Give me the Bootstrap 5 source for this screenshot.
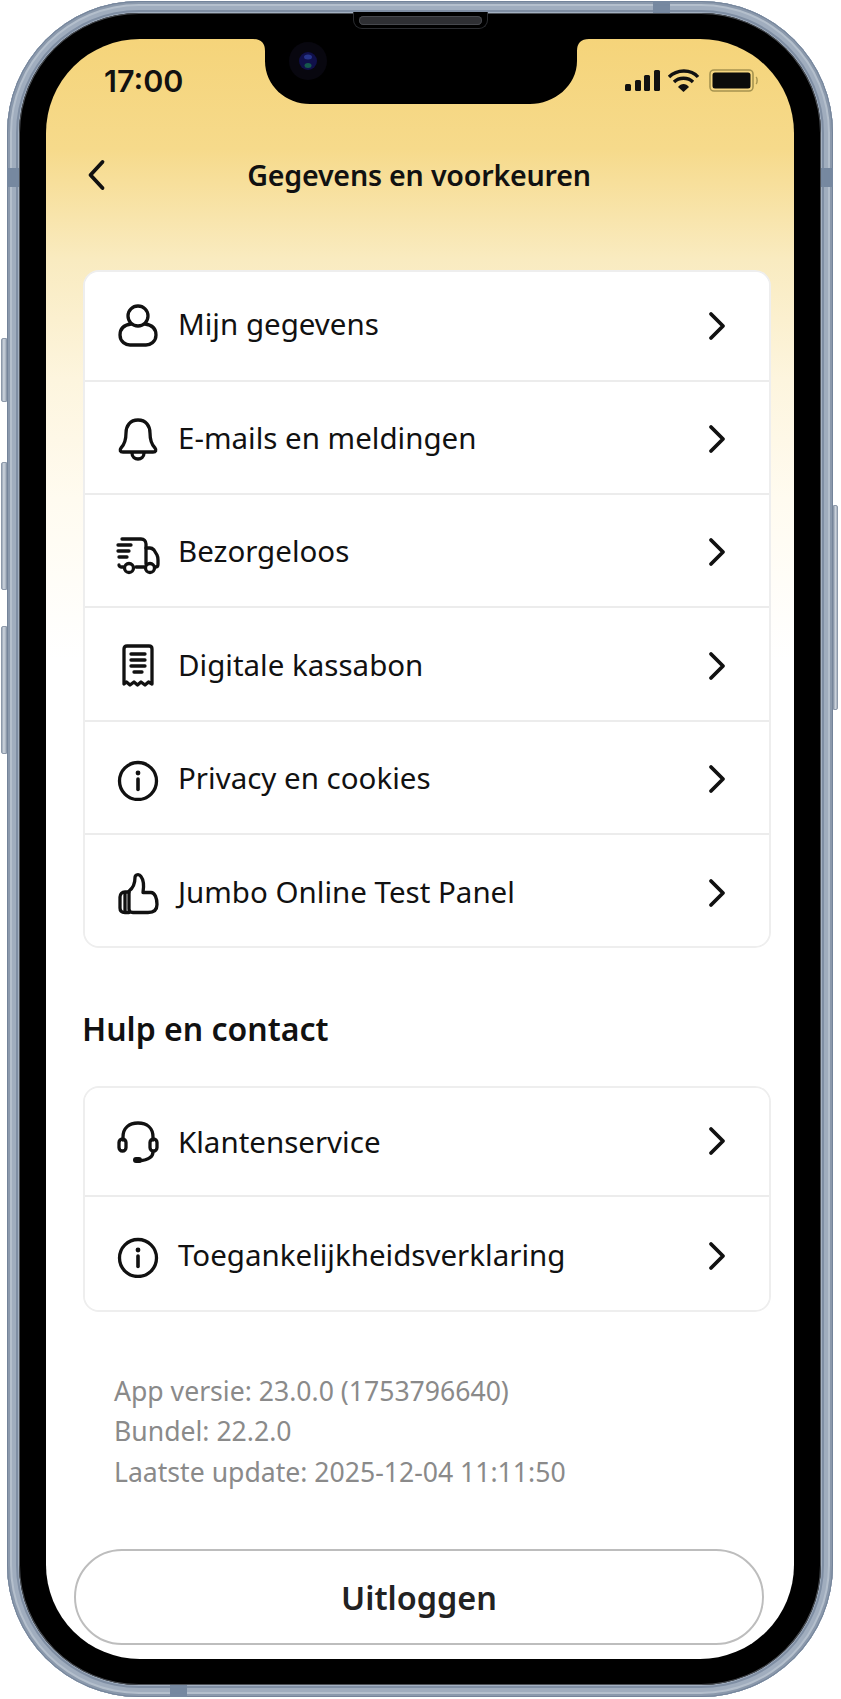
<!doctype html>
<html lang="nl">
<head>
<meta charset="utf-8">
<title>Gegevens en voorkeuren</title>
<link href="https://cdn.jsdelivr.net/npm/bootstrap@5.3.0/dist/css/bootstrap.min.css" rel="stylesheet">
<style>
html,body{margin:0;background:#fff;height:1699px;overflow:hidden}
body{font-family:"Noto Sans","Liberation Sans",sans-serif;color:#111}
.stage{position:relative;width:841px;height:1699px;padding:1px 8px 2px 7px}
.sidekey{position:absolute;background:linear-gradient(90deg,#98a4b4,#ced5de 45%,#a3aebc);border:1px solid #8d99aa}
.k1{left:1px;top:338px;width:6px;height:64px;border-radius:2px 0 0 2px}
.k2{left:1px;top:462px;width:6px;height:128px;border-radius:2px 0 0 2px}
.k3{left:1px;top:626px;width:6px;height:128px;border-radius:2px 0 0 2px}
.k4{left:833px;top:505px;width:5px;height:205px;border-radius:0 2px 2px 0}
.shell{position:relative;height:100%;padding:12px;border-radius:132px;background:#a3b0c1;box-shadow:inset 0 0 0 1px #74849a,inset 0 0 0 3px #8b99ac,inset 0 0 0 5px #b4bfcc,inset 0 0 0 9px #a0adbe,inset 0 0 0 11px #7f8ea3}
.band{position:absolute;background:#7688a0}
.b1{left:0;top:167px;width:12px;height:19px}
.b2{right:0;top:167px;width:12px;height:19px}
.b3{left:646px;top:0;width:17px;height:12px}
.b4{left:163px;bottom:0;width:17px;height:12px}
.bezel{height:100%;padding:26px 27px;border-radius:120px;background:#000;box-shadow:inset 0 0 0 1px #4b4f55}
.speaker{position:absolute;left:346px;top:11px;width:135px;height:17px;background:#000;border:1px solid #2a2c30;border-top:0;border-radius:0 0 9px 9px}
.speaker::after{content:"";position:absolute;left:5px;right:5px;top:4px;height:9px;border-radius:5px;background:#2e2f33;box-shadow:inset 0 0 0 1px #46484d}
.display{position:relative;height:100%;border-radius:94px;overflow:hidden;background:linear-gradient(180deg,#f5d47a 0,#f6da8b 110px,#f8e4aa 175px,#f9ebc0 220px,#fdf5de 340px,#fffbf0 460px,#fff 620px);padding:0 23px 0 37px}
.notch{position:absolute;left:0;top:0;width:748px;height:70px}
.statusline{height:113px;padding:26px 0 0 21px}
.clock{font-family:Inter,"Liberation Sans",sans-serif;font-weight:600;font-size:30.500px;line-height:32px;width:450px}
.signals{margin-left:auto;margin-right:12px;margin-top:3px}
.titlebar{position:relative;height:46px;margin-left:-37px;margin-right:-23px;margin-bottom:72px}
.backlink{position:absolute;left:41px;top:7px;width:20px;height:32px;display:block}
.pagetitle{margin:0;font-size:28.600px;line-height:44px;font-weight:600;letter-spacing:-.2px;color:#111;padding-right:2px}
.menulist{border:2px solid #eeeeee;border-radius:16px;overflow:hidden;background:#fff}
.menurow{height:113.400px;padding:3px 43px 0 31px;border:0;border-bottom:2px solid #ececec;border-radius:0!important;font-size:29.500px;color:#111;background:#fff;gap:18px;margin:0}
.menurow:first-child{height:109.600px;padding-top:0}
.menurow:first-child .rowtext{margin-top:-3px}
.closinglist .menurow:first-child .rowtext{margin-top:1px}
.menurow:last-child{height:110.400px;border-bottom:0;padding-top:5px}
.closinglist .menurow:last-child{height:112.400px}
.ico{width:44px;height:44px;flex:none;margin-top:1px}
.ico *{fill:none;stroke:#111;stroke-width:3.300;stroke-linecap:round;stroke-linejoin:round}
.solid{fill:#111!important;stroke:none!important}
.rowtext{flex:1 1 auto;line-height:40px;white-space:nowrap;margin-top:-2px}
.chev{width:18px;height:30px;flex:none;fill:none;stroke:#111;stroke-width:3.800;stroke-linecap:round;stroke-linejoin:round}
.grouphead{font-size:32px;font-weight:600;line-height:44px;margin:59px 0 35px -1px;color:#111}
.versioninfo{margin:59px 0 0 31px;font-size:26.600px;line-height:40.500px;color:#8a8a8a;white-space:nowrap}
.logoutbtn{display:block;margin:57px 0 0 -9px;width:690px;height:96px;border:2px solid #bdbdbd;border-radius:48px;background:#fff;font-size:32.400px;font-weight:600;color:#222;padding:0}
.logoutbtn:hover{background:#fff;color:#222;border-color:#bdbdbd}
</style>
</head>
<body>
<svg width="0" height="0" class="d-block" aria-hidden="true">
  <symbol id="i-info" viewBox="0 0 44 44">
    <circle cx="22" cy="24" r="18.500"/>
    <circle class="solid" cx="22" cy="16" r="2.400"/>
    <path d="M22 22v10.500" stroke-width="3.600"/>
  </symbol>
  <symbol id="i-chev" viewBox="0 0 18 30"><path d="M3 3l12 12L3 27"/></symbol>
</svg>
<div class="stage">
  <span class="sidekey k1"></span><span class="sidekey k2"></span><span class="sidekey k3"></span><span class="sidekey k4"></span>
  <div class="shell">
    <span class="band b1"></span><span class="band b2"></span><span class="band b3"></span><span class="band b4"></span>
    <div class="bezel">
      <div class="display">
        <svg class="notch" viewBox="0 0 748 70" aria-hidden="true">
          <path fill="#000" d="M207 0Q219 0 219 12V22C219 47 240 65 264 65H484C508 65 531 47 531 22V12Q531 0 543 0Z"/>
          <circle cx="262" cy="22" r="19" fill="#08070f"/>
          <circle cx="262" cy="22" r="9" fill="#10104a"/>
          <ellipse cx="262" cy="18" rx="4" ry="2.500" fill="#26358a"/>
          <ellipse cx="262" cy="26.500" rx="3.500" ry="2.500" fill="#15584c"/>
        </svg>
        <div class="statusline d-flex align-items-start">
          <span class="clock">17:00</span>
          <svg class="signals" width="134" height="32" viewBox="0 0 134 32" aria-hidden="true">
            <rect x="0" y="16" width="6" height="7" rx="1.500" fill="#111"/>
            <rect x="10" y="12" width="6" height="11" rx="1.500" fill="#111"/>
            <rect x="19" y="7" width="6" height="16" rx="1.500" fill="#111"/>
            <rect x="29" y="2" width="6" height="21" rx="1.500" fill="#111"/>
            <path d="M44 9C52 1 66 1 73 9" fill="none" stroke="#111" stroke-width="3.400"/>
            <path d="M49 14C54 9 63 9 68 14" fill="none" stroke="#111" stroke-width="3.400"/>
            <path d="M53 19C56 15 61 15 64 19L58.500 24Z" fill="#111"/>
            <rect x="85" y="2" width="43" height="21" rx="4" fill="none" stroke="#a6934f" stroke-width="1.600"/>
            <rect x="87.500" y="4.500" width="38" height="16" rx="2.500" fill="#0b0b0b"/>
            <path d="M131 9c1.500 1 1.500 6 0 7" fill="none" stroke="#a6934f" stroke-width="1.400"/>
          </svg>
        </div>
        <div class="titlebar d-flex align-items-center justify-content-center">
          <a class="backlink" href="#" aria-label="Terug">
            <svg width="20" height="32" viewBox="0 0 20 32" aria-hidden="true"><path d="M15.500 3L3.500 16l12 13" fill="none" stroke="#111" stroke-width="3.800" stroke-linecap="round" stroke-linejoin="round"/></svg>
          </a>
          <h1 class="pagetitle">Gegevens en voorkeuren</h1>
        </div>

        <div class="list-group menulist">
          <a href="#" class="list-group-item menurow d-flex align-items-center">
            <svg class="ico" viewBox="0 0 44 44" aria-hidden="true"><circle cx="22" cy="12" r="10"/><path d="M15 20C8 21 4 25 4 31c0 7 6 10 10 10h16c4 0 10-3 10-10 0-6-4-10-11-11"/></svg>
            <span class="rowtext">Mijn gegevens</span>
            <svg class="chev" aria-hidden="true"><use href="#i-chev"/></svg>
          </a>
          <a href="#" class="list-group-item menurow d-flex align-items-center">
            <svg class="ico" viewBox="0 0 44 44" aria-hidden="true"><path d="M22 3C14 3 10 9 10 16c0 8-2 12-5 15-1.500 2-1 4 2 4h30c3 0 3.500-2 2-4-3-3-5-7-5-15 0-7-4-13-12-13Z"/><path d="M16 36c0 8 12 8 12 0"/></svg>
            <span class="rowtext">E-mails en meldingen</span>
            <svg class="chev" aria-hidden="true"><use href="#i-chev"/></svg>
          </a>
          <a href="#" class="list-group-item menurow d-flex align-items-center">
            <svg class="ico" viewBox="0 0 44 44" aria-hidden="true"><path d="M6 8h19c3 0 5 2 5 5v20M20 36h8M7 36H5c-1 0-2-1-2-2"/><path d="M30 17h4c2 0 3 1 4 2l3 5c1 2 1 3 1 5v4c0 2-1 3-2 3h-1"/><path d="M2 14h13M2 20h11M3 26h8"/><circle cx="13" cy="37" r="4.500"/><circle cx="34" cy="37" r="4.500"/></svg>
            <span class="rowtext">Bezorgeloos</span>
            <svg class="chev" aria-hidden="true"><use href="#i-chev"/></svg>
          </a>
          <a href="#" class="list-group-item menurow d-flex align-items-center">
            <svg class="ico" viewBox="0 0 44 44" aria-hidden="true"><path d="M11 2h22c2 0 3 1 3 3v35l-3.500-2-3.500 3-4-3-3.500 3-3.500-3-4 3-3.500-3L8 40V5c0-2 1-3 3-3Z"/><path d="M15 10h14M15 16h14M15 22h14M18 28h8"/></svg>
            <span class="rowtext">Digitale kassabon</span>
            <svg class="chev" aria-hidden="true"><use href="#i-chev"/></svg>
          </a>
          <a href="#" class="list-group-item menurow d-flex align-items-center">
            <svg class="ico" aria-hidden="true"><use href="#i-info"/></svg>
            <span class="rowtext">Privacy en cookies</span>
            <svg class="chev" aria-hidden="true"><use href="#i-chev"/></svg>
          </a>
          <a href="#" class="list-group-item menurow d-flex align-items-center">
            <svg class="ico" viewBox="0 0 44 44" aria-hidden="true"><path d="M13 20v18c0 2 1 3.500 4 3.500h15c6 0 9-3 9-8 0-6-2-12-6-12H27c1-6 1-12-2-16-2-3-6-2-6 1 0 6-1 10-6 13.500Z"/><path d="M13 21H9c-3 0-5 2-5 5v11c0 3 2 4.500 5 4.500h4"/><path d="M9 22v19"/></svg>
            <span class="rowtext">Jumbo Online Test Panel</span>
            <svg class="chev" aria-hidden="true"><use href="#i-chev"/></svg>
          </a>
        </div>

        <h2 class="grouphead">Hulp en contact</h2>

        <div class="list-group menulist closinglist">
          <a href="#" class="list-group-item menurow d-flex align-items-center">
            <svg class="ico" viewBox="0 0 44 44" aria-hidden="true"><path d="M7 20v-3C7 8 13 3 22 3s15 5 15 14v3"/><rect x="3" y="19" width="7" height="12" rx="3.500"/><rect x="34" y="19" width="7" height="12" rx="3.500"/><path d="M37 32c0 5-5 8-14 9"/><rect class="solid" x="17" y="37" width="9" height="6" rx="3"/></svg>
            <span class="rowtext">Klantenservice</span>
            <svg class="chev" aria-hidden="true"><use href="#i-chev"/></svg>
          </a>
          <a href="#" class="list-group-item menurow d-flex align-items-center">
            <svg class="ico" aria-hidden="true"><use href="#i-info"/></svg>
            <span class="rowtext">Toegankelijkheidsverklaring</span>
            <svg class="chev" aria-hidden="true"><use href="#i-chev"/></svg>
          </a>
        </div>

        <div class="versioninfo">
          <div>App versie: 23.0.0 (1753796640)</div>
          <div>Bundel: 22.2.0</div>
          <div>Laatste update: 2025-12-04 11:11:50</div>
        </div>

        <button type="button" class="btn logoutbtn">Uitloggen</button>
      </div>
    </div>
    <span class="speaker"></span>
  </div>
</div>
<script src="https://cdn.jsdelivr.net/npm/bootstrap@5.3.0/dist/js/bootstrap.bundle.min.js"></script>
</body>
</html>
